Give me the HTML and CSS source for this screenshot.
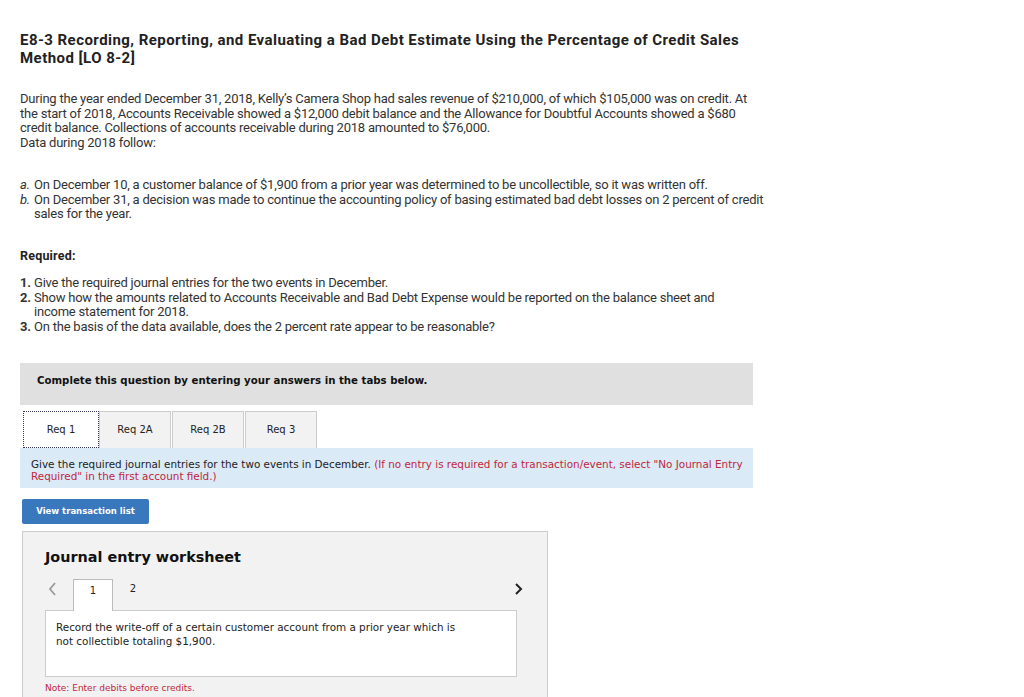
FILE: index.html
```html
<!DOCTYPE html>
<html>
<head>
<meta charset="utf-8">
<link rel="stylesheet" href="styles.css">
</head>
<body>
<div class="page">
  <h1 class="title">E8-3 Recording, Reporting, and Evaluating a Bad Debt Estimate Using the Percentage of Credit Sales Method [LO 8-2]</h1>
  <p class="para">During the year ended December 31, 2018, Kelly’s Camera Shop had sales revenue of $210,000, of which $105,000 was on credit. At the start of 2018, Accounts Receivable showed a $12,000 debit balance and the Allowance for Doubtful Accounts showed a $680 credit balance. Collections of accounts receivable during 2018 amounted to $76,000.<br>Data during 2018 follow:</p>
  <ul class="events">
    <li><span class="lbl"><i>a.</i></span><span class="txt">On December 10, a customer balance of $1,900 from a prior year was determined to be uncollectible, so it was written off.</span></li>
    <li><span class="lbl"><i>b.</i></span><span class="txt">On December 31, a decision was made to continue the accounting policy of basing estimated bad debt losses on 2 percent of credit sales for the year.</span></li>
  </ul>
  <p class="req-head">Required:</p>
  <ol class="reqs">
    <li><span class="lbl"><b>1.</b></span><span class="txt">Give the required journal entries for the two events in December.</span></li>
    <li><span class="lbl"><b>2.</b></span><span class="txt">Show how the amounts related to Accounts Receivable and Bad Debt Expense would be reported on the balance sheet and<br>income statement for 2018.</span></li>
    <li><span class="lbl"><b>3.</b></span><span class="txt">On the basis of the data available, does the 2 percent rate appear to be reasonable?</span></li>
  </ol>

  <div class="widget">
    <div class="banner">Complete this question by entering your answers in the tabs below.</div>
    <div class="tabs">
      <div class="tab active">Req 1</div>
      <div class="tab">Req 2A</div>
      <div class="tab">Req 2B</div>
      <div class="tab">Req 3</div>
    </div>
    <div class="instr">Give the required journal entries for the two events in December. <span class="red">(If no entry is required for a transaction/event, select "No Journal Entry Required" in the first account field.)</span></div>
    <button class="btn">View transaction list</button>
    <div class="sheet">
      <h2 class="sheet-title">Journal entry worksheet</h2>
      <div class="nav">
        <span class="chev left"><svg width="9" height="14" viewBox="0 0 9 14"><path d="M7 1 L2 7 L7 13" fill="none" stroke="#999" stroke-width="1.8"/></svg></span>
        <div class="ntab active">1</div>
        <div class="ntab">2</div>
        <span class="spacer"></span>
        <span class="chev right"><svg width="9" height="14" viewBox="0 0 9 14"><path d="M2 2 L7 7 L2 12" fill="none" stroke="#222" stroke-width="2"/></svg></span>
      </div>
      <div class="desc">Record the write-off of a certain customer account from a prior year which is not collectible totaling $1,900.</div>
      <div class="note">Note: Enter debits before credits.</div>
    </div>
  </div>
</div>
</body>
</html>
```
FILE: styles.css
```css
html, body { margin: 0; padding: 0; background: #fff; }
.page { padding: 31px 0 0 20px; font-family: Roboto, "Liberation Sans", sans-serif; color: #333; width: 760px; }
.title { font-size: 15px; font-weight: 700; line-height: 18px; margin: 0; color: #222; width: 740px; letter-spacing: 0.45px; }
.para { font-size: 13px; line-height: 14.7px; margin: 25px 0 0 0; width: 744px; letter-spacing: -0.22px; }
.events, .reqs { list-style: none; margin: 0; padding: 0; font-size: 13px; line-height: 14.7px; letter-spacing: -0.22px; }
.events { margin-top: 27px; }
.events li, .reqs li { display: flex; }
.lbl { width: 14px; flex: none; }
.txt { width: 740px; }
.req-head { font-size: 12.5px; font-weight: 700; margin: 26px 0 0 0; line-height: 15px; color: #222; letter-spacing: 0.2px; }
.reqs { margin-top: 13px; }
.widget { margin-top: 28px; font-family: "DejaVu Sans", Verdana, sans-serif; width: 733px; }
.banner { background: #e0e0e0; height: 42px; box-sizing: border-box; padding: 12px 0 0 17px; font-size: 10.2px; font-weight: 700; color: #111; }
.tabs { display: flex; padding: 6px 0 0 3px; gap: 1px; }
.tab { width: 72px; height: 37px; box-sizing: border-box; background: #f2f2f2; border: 1px solid #ccc; border-bottom: none; font-size: 10px; display: flex; align-items: center; justify-content: center; color: #222; }
.tab.active { background: #fff; border: 1px dotted #335; width: 76px; margin-right: -1px; }
.instr { background: #dbeaf7; padding: 10px 10px 6px 11px; font-size: 10.4px; line-height: 12px; color: #222; }
.red { color: #c0263c; }
.btn { display: block; margin: 11px 0 0 2px; background: #3a78bd; color: #fff; border: none; border-radius: 2px; font-family: "DejaVu Sans", sans-serif; font-size: 8.5px; font-weight: 700; width: 127px; height: 25px; padding: 0; }
.sheet { margin: 7px 0 0 2px; width: 526px; background: #f2f2f2; border: 1px solid #ccc; border-bottom: none; box-sizing: border-box; padding: 16px 26px 0 22px; height: 170px; }
.sheet-title { margin: 0; font-size: 14.4px; font-weight: 700; color: #111; line-height: 18px; }
.nav { display: flex; align-items: flex-end; margin-top: 12px; height: 32px; }
.chev { display: flex; align-items: center; height: 22px; align-self: flex-start; }
.chev.left { margin-left: 3px; width: 25px; }
.ntab { width: 40px; height: 32px; box-sizing: border-box; display: flex; justify-content: center; padding-top: 5px; font-size: 10px; color: #222; }
.ntab.active { background: #fff; border: 1px solid #bbb; border-bottom: none; position: relative; top: 1px; }
.spacer { flex: 1; }
.chev.right { margin-right: -2px; }
.desc { background: #fff; border: 1px solid #ccc; height: 67px; width: 472px; box-sizing: border-box; padding: 9px 52px 0 10px; font-size: 10.4px; line-height: 14px; color: #222; }
.note { margin-top: 6px; font-size: 9px; color: #c0263c; }
```
